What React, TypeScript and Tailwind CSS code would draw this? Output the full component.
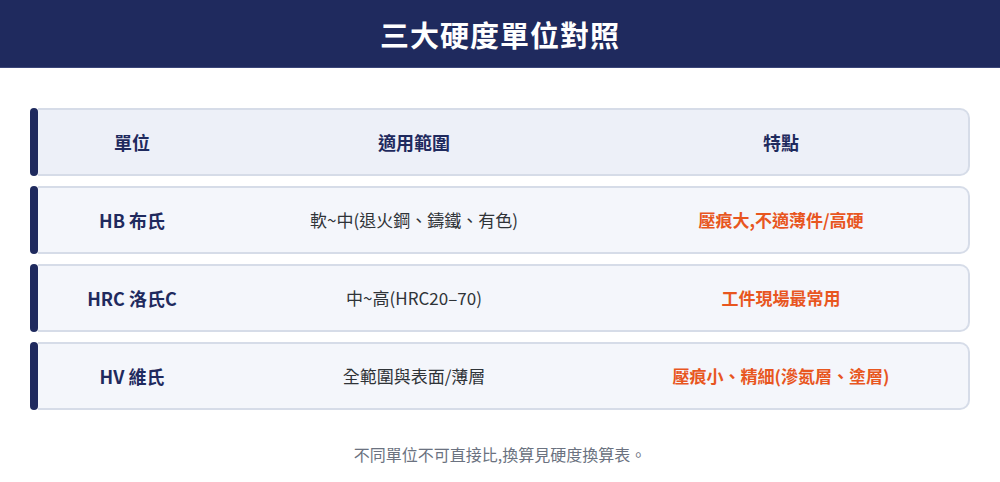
import React from "react";

const navy = "#1f2a5e";

type Row = { unit: string; range: string; feature: string };

const rows: Row[] = [
  { unit: "HB 布氏", range: "軟~中(退火鋼、鑄鐵、有色)", feature: "壓痕大,不適薄件/高硬" },
  { unit: "HRC 洛氏C", range: "中~高(HRC20–70)", feature: "工件現場最常用" },
  { unit: "HV 維氏", range: "全範圍與表面/薄層", feature: "壓痕小、精細(滲氮層、塗層)" },
];

const font = {
  fontFamily: '"Noto Sans CJK TC", "Noto Sans", sans-serif',
};

const RowCard = ({
  header,
  children,
}: {
  header?: boolean;
  children: React.ReactNode;
}) => (
  <div className="flex h-[68px]">
    <div className="w-[8px] rounded-full bg-[#1f2a5e]" />
    <div
      className={`flex-1 grid grid-cols-[188px_376px_1fr] pr-[8px] items-center border-2 border-l-0 border-[#d6dce8] rounded-r-[10px] ${
        header ? "bg-[#edf0f8]" : "bg-[#f4f6fb]"
      }`}
    >
      {children}
    </div>
  </div>
);

export default function App() {
  return (
    <div className="w-[1000px] h-[482px] bg-white" style={font}>
      {/* title bar */}
      <div className="h-[68px] bg-[#1f2a5e] border-b border-[#3b4679] flex items-center justify-center">
        <h1 className="text-white text-[29px] font-bold tracking-[1px] leading-none mt-[2px]">
          三大硬度單位對照
        </h1>
      </div>

      <div className="px-[30px] pt-[40px] flex flex-col gap-[10px]">
        <RowCard header>
          <div className="text-center text-[18px] font-bold text-[#1f2a5e]">單位</div>
          <div className="text-center text-[18px] font-bold text-[#1f2a5e]">適用範圍</div>
          <div className="text-center text-[18px] font-bold text-[#1f2a5e]">特點</div>
        </RowCard>
        {rows.map((r, i) => (
          <RowCard key={i}>
            <div className="text-center text-[18px] font-bold" style={{ color: navy }}>
              {r.unit}
            </div>
            <div className="text-center text-[17px] text-[#2f3337]">{r.range}</div>
            <div className="text-center text-[17px] font-bold text-[#e8561f]">{r.feature}</div>
          </RowCard>
        ))}
      </div>

      <p className="mt-[32px] text-center text-[16px] text-[#6b7280]">
        不同單位不可直接比,換算見硬度換算表。
      </p>
    </div>
  );
}
